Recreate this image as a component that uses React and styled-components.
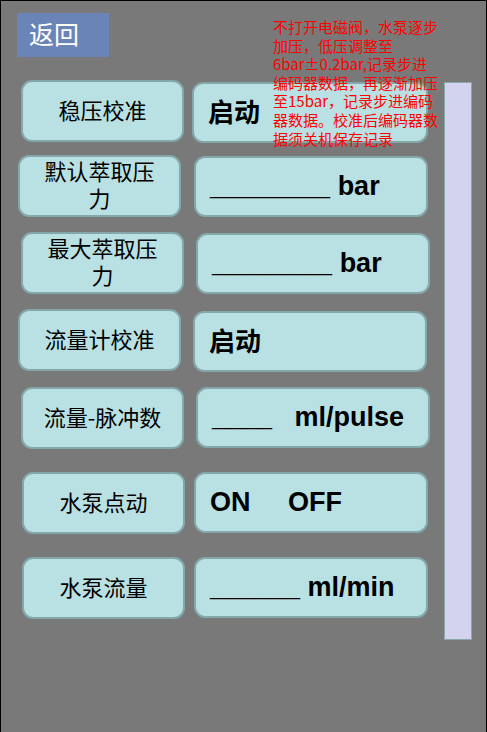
import React from "react";
import styled, { createGlobalStyle } from "styled-components";

const Global = createGlobalStyle`
  html, body { margin: 0; padding: 0; background: #797979; }
  #root { width: 487px; height: 732px; }
`;

const Frame = styled.div`
  position: relative;
  width: 487px;
  height: 732px;
  box-sizing: border-box;
  border: 1px solid #000;
  border-bottom: 0;
  background: #797979;
  overflow: hidden;
  font-family: "Noto Sans CJK SC", sans-serif;
`;

const Header = styled.div`
  padding: 12px 0 0 16px;
`;

const BackButton = styled.div`
  width: 92px;
  height: 44px;
  box-sizing: border-box;
  background: #6b84b7;
  color: #fff;
  font-size: 25px;
  line-height: 40px;
  padding-left: 12px;
  font-family: "Noto Sans CJK SC", sans-serif;
`;

const Content = styled.div`
  display: flex;
  margin-top: 23px;
`;

const Rows = styled.div`
  display: flex;
  flex-direction: column;
`;

const Row = styled.div`
  display: flex;
  align-items: flex-start;
  margin-top: ${(p) => p.$top}px;
  margin-left: ${(p) => p.$left}px;
`;

const Cell = styled.div`
  box-sizing: border-box;
  background: #b9e0e3;
  border: 2px solid #84a8aa;
  border-radius: 11px;
  display: flex;
  align-items: center;
`;

const Label = styled(Cell)`
  width: 163px;
  height: 62px;
  justify-content: center;
  text-align: center;
  padding: 0 18px 4px;
  font-family: "Noto Sans CJK SC", sans-serif;
  font-size: 22px;
  line-height: 27px;
  color: #000;
`;

const Value = styled(Cell)`
  width: ${(p) => p.$w}px;
  height: 61px;
  margin-top: ${(p) => p.$off}px;
  margin-left: ${(p) => p.$gap}px;
  padding-left: 14px;
  font-family: "Liberation Sans", "Noto Sans CJK SC", sans-serif;
  font-weight: bold;
  font-size: 27px;
  color: #000;
  white-space: pre;
`;

const CjkValue = styled.span`
  font-family: "Noto Sans CJK SC", sans-serif;
  font-size: 26px;
  font-weight: bold;
  padding-bottom: 5px;
`;

const ScrollTrack = styled.div`
  margin-left: auto;
  margin-right: 14px;
  margin-top: 2px;
  width: 28px;
  height: 558px;
  box-sizing: border-box;
  background: #d3d3ef;
  border: 1px solid #8aa8aa;
`;

const Note = styled.div`
  position: absolute;
  left: 272px;
  top: 17px;
  color: #ff0000;
  font-family: "Noto Sans CJK SC", sans-serif;
  font-size: 15px;
  line-height: 18.6px;
  white-space: nowrap;
`;

const rows = [
  { top: 0, left: 20, gap: 8, w: 236, off: 2, label: "稳压校准", value: <CjkValue>启动</CjkValue> },
  { top: 12, left: 17, gap: 13, w: 234, off: 1, label: "默认萃取压力", value: "________ bar" },
  { top: 15, left: 20, gap: 12, w: 234, off: 1, label: "最大萃取压力", value: "________ bar" },
  { top: 15, left: 17, gap: 12, w: 234, off: 2, label: "流量计校准", value: <CjkValue>启动</CjkValue> },
  { top: 15, left: 20, gap: 12, w: 234, off: 0, label: "流量-脉冲数", value: "____   ml/pulse" },
  { top: 23, left: 21, gap: 9, w: 234, off: 0, label: "水泵点动", value: "ON     OFF" },
  { top: 23, left: 21, gap: 9, w: 234, off: 0, label: "水泵流量", value: "______ ml/min" },
];

const noteLines = [
  "不打开电磁阀，水泵逐步",
  "加压，低压调整至",
  "6bar±0.2bar,记录步进",
  "编码器数据，再逐渐加压",
  "至15bar，记录步进编码",
  "器数据。校准后编码器数",
  "据须关机保存记录",
];

export default function App() {
  return (
    <>
      <Global />
      <Frame>
        <Header>
          <BackButton>返回</BackButton>
        </Header>
        <Content>
          <Rows>
            {rows.map((r, i) => (
              <Row key={i} $top={r.top} $left={r.left}>
                <Label>{r.label}</Label>
                <Value $w={r.w} $off={r.off} $gap={r.gap}>
                  {r.value}
                </Value>
              </Row>
            ))}
          </Rows>
          <ScrollTrack />
        </Content>
        <Note>
          {noteLines.map((l, i) => (
            <div key={i}>{l}</div>
          ))}
        </Note>
      </Frame>
    </>
  );
}
